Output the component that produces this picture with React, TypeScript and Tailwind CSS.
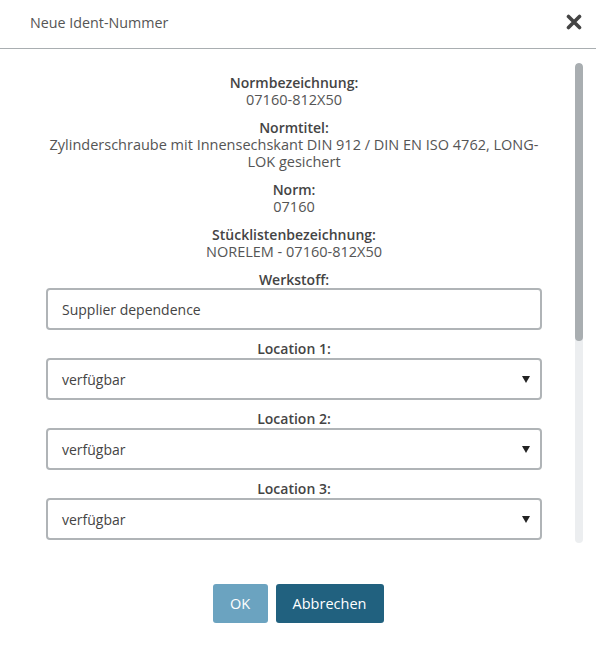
import React from "react";

const INFO = [
  { label: "Normbezeichnung:", value: "07160-812X50" },
  {
    label: "Normtitel:",
    value: "Zylinderschraube mit Innensechskant DIN 912 / DIN EN ISO 4762, LONG-LOK gesichert",
  },
  { label: "Norm:", value: "07160" },
  { label: "Stücklistenbezeichnung:", value: "NORELEM - 07160-812X50" },
];

const LOCATIONS = ["Location 1:", "Location 2:", "Location 3:"];

function CloseIcon() {
  return (
    <svg width="16" height="16" viewBox="0 0 16 16" className="text-[#444]">
      <path d="M2.5 2.5 L13.5 13.5 M13.5 2.5 L2.5 13.5" stroke="currentColor" strokeWidth="3.6" strokeLinecap="round" />
    </svg>
  );
}

function Caret() {
  return (
    <svg width="8" height="7" viewBox="0 0 8 7" className="text-[#222]">
      <polygon points="0,0 8,0 4,7" fill="currentColor" />
    </svg>
  );
}

export default function App() {
  return (
    <div
      className="w-[596px] h-[645px] bg-white flex flex-col text-[#555]"
      style={{ fontFamily: "'Open Sans', 'Noto Sans', sans-serif" }}
    >
      {/* header */}
      <div className="h-[49px] shrink-0 flex items-center justify-between pl-[30px] pr-[14px] border-b border-[#a9aeb1]">
        <span className="text-[14.3px] text-[#555] pb-[3px]">Neue Ident-Nummer</span>
        <button className="pb-[4px]">
          <CloseIcon />
        </button>
      </div>

      {/* body */}
      <div className="flex h-[510px] shrink-0 pt-[14px] pb-[14px]">
        <div className="ml-[46px] w-[496px] overflow-hidden pt-[11px]">
          {INFO.map((it) => (
            <div key={it.label} className="text-center leading-[17px] mb-[11px]">
              <div className="text-[14px] font-semibold text-[#444]">{it.label}</div>
              <div className="text-[14.5px]">{it.value}</div>
            </div>
          ))}

          <div className="text-center text-[14px] leading-[17px] font-semibold text-[#444]">Werkstoff:</div>
          <div className="h-[42px] border-2 border-[#b0b4b7] rounded-[4px] flex items-center px-[14px] text-[14px] text-[#444]">
            Supplier dependence
          </div>

          {LOCATIONS.map((l) => (
            <div key={l} className="mt-[10px]">
              <div className="text-center text-[14px] leading-[17px] font-semibold text-[#444] mb-[1px]">{l}</div>
              <div className="h-[42px] border-2 border-[#b0b4b7] rounded-[4px] flex items-center justify-between pl-[14px] pr-[10px] text-[14px] text-[#444]">
                <span>verfügbar</span>
                <Caret />
              </div>
            </div>
          ))}
        </div>

        {/* scrollbar */}
        <div className="ml-[33px] w-[8px] h-[480px] rounded-full bg-[#eceef0] overflow-hidden">
          <div className="h-[278px] rounded-full bg-[#a9aeb1]" />
        </div>
      </div>

      {/* footer */}
      <div className="flex justify-center gap-[8px] pt-[25px]">
        <button className="w-[55px] h-[39px] rounded-[3px] bg-[#6ba3c0] text-white text-[14.5px]">OK</button>
        <button className="w-[108px] h-[39px] rounded-[3px] bg-[#21617f] text-white text-[14.5px]">Abbrechen</button>
      </div>
    </div>
  );
}
